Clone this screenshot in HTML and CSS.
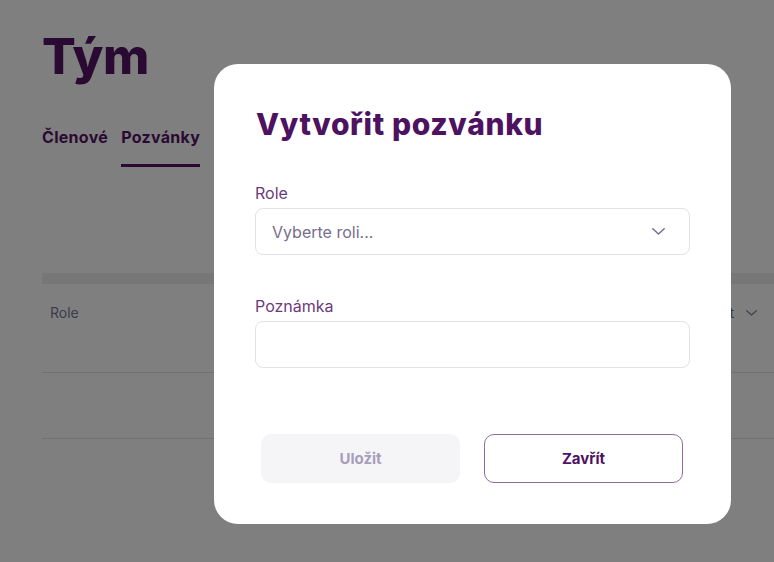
FILE: index.html
```html
<!DOCTYPE html>
<html lang="cs">
<head>
<meta charset="utf-8">
<title>Tým</title>
<link rel="stylesheet" href="styles.css">
</head>
<body>
<main class="page">
  <h1 class="page-title">Tým</h1>
  <nav class="tabs">
    <a class="tab">Členové</a>
    <a class="tab tab-active">Pozvánky</a>
  </nav>
  <div class="table">
    <div class="table-band"></div>
    <div class="table-head">
      <span class="th">Role</span>
      <span class="th th-sort">Vytvořit
        <svg class="sort-icon" width="11" height="6" viewBox="0 0 11 6"><path d="M0.7 0.7 L5.5 5 L10.3 0.7" fill="none" stroke="currentColor" stroke-width="1.5" stroke-linecap="round" stroke-linejoin="round"/></svg>
      </span>
    </div>
    <div class="table-row"></div>
  </div>
</main>

<div class="overlay"></div>

<section class="modal" role="dialog">
  <h2 class="modal-title">Vytvořit pozvánku</h2>
  <div class="field">
    <label class="field-label">Role</label>
    <div class="select">
      <span class="placeholder">Vyberte roli...</span>
      <svg class="chevron" width="13" height="7" viewBox="0 0 13 7"><path d="M0.8 0.8 L6.5 6 L12.2 0.8" fill="none" stroke="currentColor" stroke-width="1.5" stroke-linecap="round" stroke-linejoin="round"/></svg>
    </div>
  </div>
  <div class="field">
    <label class="field-label">Poznámka</label>
    <div class="input"></div>
  </div>
  <div class="actions">
    <button class="btn btn-disabled">Uložit</button>
    <button class="btn btn-outline">Zavřít</button>
  </div>
</section>
</body>
</html>
```

FILE: styles.css
```css
* { box-sizing: border-box; }
html, body { margin: 0; padding: 0; }
body {
  font-family: Inter, "Noto Sans", sans-serif;
  background: #ffffff;
  width: 774px;
  height: 562px;
  overflow: hidden;
  position: relative;
}

.page {
  padding: 26px 0 0 42px;
}
.page-title {
  margin: 0;
  font-size: 50px;
  line-height: 60px;
  font-weight: 800;
  color: #541466;
  letter-spacing: -0.3px;
}
.tabs {
  display: flex;
  gap: 13px;
  margin-top: 39px;
}
.tab {
  font-size: 16px;
  font-weight: 650;
  line-height: 24px;
  letter-spacing: 0.3px;
  color: #541466;
  padding-bottom: 15px;
  border-bottom: 3px solid transparent;
}
.tab-active {
  border-bottom-color: #541466;
}

.table {
  margin-top: 106px;
}
.table-band {
  height: 11px;
  background: #eeeeee;
}
.table-head {
  display: flex;
  justify-content: space-between;
  align-items: flex-start;
  height: 89px;
  padding: 19px 17px 0 8px;
  border-bottom: 1px solid #e2e2e2;
}
.th {
  font-size: 14px;
  line-height: 20px;
  color: #78789a;
}
.th-sort {
  display: flex;
  align-items: center;
  gap: 12px;
  color: #6a6a90;
}
.sort-icon { color: #8a8aa8; }
.table-row {
  height: 66px;
  border-bottom: 1px solid #e2e2e2;
}

.overlay {
  position: fixed;
  inset: 0;
  background: rgba(0, 0, 0, 0.5);
}

.modal {
  position: absolute;
  left: 214px;
  top: 64px;
  width: 517px;
  height: 460px;
  background: #ffffff;
  border-radius: 24px;
  padding: 42px 41px 41px 41px;
  display: flex;
  flex-direction: column;
}
.modal-title {
  margin: 0 0 39px 1px;
  font-size: 30px;
  line-height: 36px;
  font-weight: 800;
  letter-spacing: 0.65px;
  color: #4d1260;
}
.field {
  display: flex;
  flex-direction: column;
  gap: 3px;
}
.field + .field { margin-top: 39px; }
.field-label {
  font-size: 16px;
  line-height: 24px;
  color: #6b3b7c;
}
.select, .input {
  height: 47px;
  border: 1px solid #e3e1e8;
  border-radius: 8px;
  background: #ffffff;
}
.select {
  display: flex;
  align-items: center;
  justify-content: space-between;
  padding: 0 24px 0 16px;
}
.placeholder {
  font-size: 16px;
  color: #786d8c;
}
.chevron { color: #786d8c; }

.actions {
  margin-top: auto;
  display: flex;
  gap: 24px;
  padding-left: 6px;
}
.btn {
  width: 199px;
  height: 49px;
  border-radius: 10px;
  font-family: Inter, "Noto Sans", sans-serif;
  font-size: 15px;
  font-weight: 700;
  cursor: pointer;
}
.btn-disabled {
  background: #f5f5f8;
  border: none;
  color: #a69ebb;
}
.btn-outline {
  background: #ffffff;
  border: 1px solid #8e6c9b;
  color: #4d1260;
}
```
